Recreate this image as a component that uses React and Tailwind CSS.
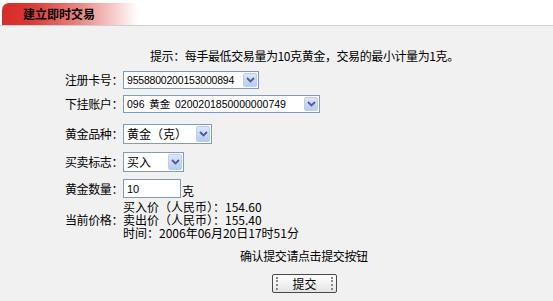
import React from "react";

const Arrow = () => (
  <div className="flex h-full w-[14px] shrink-0 items-center justify-center rounded-[2px] border border-[#b9cdf6] bg-[linear-gradient(to_bottom,#dbe6fd,#b7cbf7)]">
    <svg width="9" height="6" viewBox="0 0 9 6">
      <path d="M1 1 L4.5 4.5 L8 1" fill="none" stroke="#4d6185" strokeWidth="1.8" />
    </svg>
  </div>
);

const Row = ({ label, children, className }) => (
  <div className={`flex items-center ${className}`}>
    <div className="w-[58px] shrink-0 whitespace-nowrap tracking-[-0.4px]">{label}</div>
    <div className="flex items-center">{children}</div>
  </div>
);

export default function App() {
  return (
    <div
      className="w-[553px] h-[301px] overflow-hidden bg-[#f1f1f1] text-[12px] leading-[12px] text-black whitespace-nowrap"
      style={{ fontFamily: '"Noto Sans CJK SC", "Liberation Sans", sans-serif' }}
    >
      {/* header */}
      <div className="h-[26px] bg-white border-b border-[#cfcfcf] pt-[3px]">
        <div className="ml-[2px] flex h-[22px] w-[136px] items-center rounded-tl-[7px] bg-[linear-gradient(to_right,#d62d28_0%,#da3a36_22%,#ea8885_58%,#ffffff_100%)] pl-[21px] text-[12px] font-bold">
          建立即时交易
        </div>
      </div>

      <div className="flex flex-col pl-[65px]">
        <div className="mt-[24px] pl-[85px] tracking-[-0.4px]">
          提示：每手最低交易量为10克黄金，交易的最小计量为1克。
        </div>

        <Row label="注册卡号：" className="mt-[9px]">
          <div className="flex h-[18px] w-[136px] items-center justify-between border border-[#7f9db9] bg-white pl-[3px] pr-[1px] py-[1px] font-['Liberation_Sans',sans-serif] text-[10.5px] tracking-[-0.2px]">
            <span>9558800200153000894</span>
            <Arrow />
          </div>
        </Row>

        <Row label="下挂账户：" className="mt-[6px]">
          <div className="flex h-[18px] w-[197px] items-center justify-between border border-[#7f9db9] bg-white pl-[3px] pr-[1px] py-[1px] text-[10.5px]">
            <span>
              <span className="font-['Liberation_Sans',sans-serif]">096</span>&nbsp; 黄金&nbsp;{" "}
              <span className="font-['Liberation_Sans',sans-serif]">0200201850000000749</span>
            </span>
            <Arrow />
          </div>
        </Row>

        <Row label="黄金品种：" className="mt-[11px]">
          <div className="flex h-[20px] w-[89px] items-center justify-between border border-[#7f9db9] bg-white pl-[3px] pr-[1px] py-[1px]">
            <span>黄金（克）</span>
            <Arrow />
          </div>
        </Row>

        <Row label="买卖标志：" className="mt-[8px]">
          <div className="flex h-[20px] w-[61px] items-center justify-between border border-[#7f9db9] bg-white pl-[3px] pr-[1px] py-[1px]">
            <span>买入</span>
            <Arrow />
          </div>
        </Row>

        <Row label="黄金数量：" className="mt-[7px]">
          <div className="flex h-[19px] w-[58px] items-center border border-[#7f9db9] bg-white pl-[3px] font-['Liberation_Sans',sans-serif] text-[11px]">
            10
          </div>
          <span className="ml-[1px] mt-[4px]">克</span>
        </Row>

        <div className="mt-[2px] flex items-center leading-[13px]">
          <div className="w-[58px] shrink-0 tracking-[-0.4px]">当前价格：</div>
          <div className="flex flex-col">
            <span>买入价（人民币）：154.60</span>
            <span>卖出价（人民币）：155.40</span>
            <span>时间：2006年06月20日17时51分</span>
          </div>
        </div>

        <div className="mt-[11px] pl-[175px] tracking-[-0.4px]">确认提交请点击提交按钮</div>

        <div className="mt-[12px] ml-[207px] flex h-[19px] w-[65px] items-center justify-between rounded-[2px] border border-[#4a4a4a] bg-[linear-gradient(to_bottom,#ffffff,#e4e4e4)] px-[3px]">
          <div className="h-[13px] border-l-2 border-dotted border-[#8a8a8a]" />
          <span className="leading-[12px]">提交</span>
          <div className="h-[13px] border-l-2 border-dotted border-[#8a8a8a]" />
        </div>
      </div>
    </div>
  );
}
